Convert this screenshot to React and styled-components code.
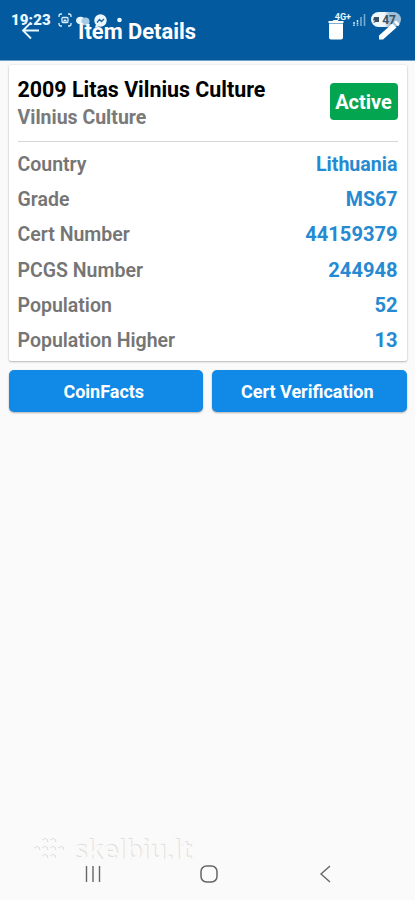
import React from "react";
import styled, { createGlobalStyle } from "styled-components";

const GlobalStyle = createGlobalStyle`
  * { box-sizing: border-box; }
  body { margin: 0; background: #fafafa; font-family: Roboto, "Liberation Sans", sans-serif; }
`;

const Screen = styled.div`
  display: flex;
  flex-direction: column;
  width: 415px;
  height: 900px;
  overflow: hidden;
  background: #fafafa;
`;

const Header = styled.header`
  position: relative;
  flex: none;
  height: 60px;
  background: #035a9f;
  box-shadow: 0 1px 0 #729dc6;
`;

const AppBar = styled.div`
  position: relative;
  display: flex;
  align-items: flex-start;
  height: 60px;
  padding: 18px 14px 0 21px;
  color: #fff;
`;

const AppTitle = styled.h1`
  flex: 1;
  margin: 0 0 0 38px;
  font-size: 21.9px;
  line-height: 27px;
  font-weight: 700;
  white-space: nowrap;
`;

const Icon = styled.svg`
  display: block;
  flex: none;
  margin-left: ${(p) => p.$gap || 0}px;
`;

const StatusBar = styled.div`
  position: absolute;
  top: 11px;
  left: 11px;
  right: 14px;
  display: flex;
  justify-content: space-between;
  height: 18px;
  color: #e9f8ff;
`;

const StatusGroup = styled.div`
  display: flex;
  align-items: flex-start;
`;

const Clock = styled.span`
  width: 47px;
  font-size: 15px;
  line-height: 19px;
  font-weight: 900;
  letter-spacing: 0.1px;
`;

const Network = styled.span`
  margin-right: 2px;
  font-size: 9px;
  line-height: 13px;
  font-weight: 700;
`;

const Battery = styled.span`
  display: flex;
  align-items: center;
  justify-content: flex-end;
  gap: 2px;
  width: 30px;
  height: 15px;
  margin: 1px 0 0 5px;
  padding-right: 5px;
  border-radius: 8px;
  background: linear-gradient(90deg, #eef7fb 45%, #9fc0d8 60%);
  color: #3c5160;
  font-size: 12px;
  font-weight: 700;
`;

const Content = styled.main`
  display: flex;
  flex-direction: column;
  flex: 1;
  padding: 5px 8.5px 0;
`;

const Card = styled.section`
  height: 296px;
  padding: 0 9px;
  border-radius: 2px;
  background: #fff;
  box-shadow: 0 1px 2px rgba(0, 0, 0, 0.24), 0 0 2px rgba(0, 0, 0, 0.12);
`;

const CardHeader = styled.div`
  display: flex;
  justify-content: space-between;
  align-items: flex-start;
  height: 77px;
  padding-top: 11px;
  border-bottom: 1px solid #d6d6d6;
`;

const CoinName = styled.h2`
  margin: 0;
  color: #000;
  font-size: 21.4px;
  line-height: 28px;
  font-weight: 700;
  white-space: nowrap;
`;

const CoinSeries = styled.p`
  margin: 0;
  color: #7a7a7a;
  font-size: 19.5px;
  line-height: 27px;
  font-weight: 700;
`;

const StatusBadge = styled.span`
  width: 68px;
  height: 37px;
  margin-top: 7px;
  border-radius: 4px;
  background: #04a551;
  color: #fff;
  font-size: 20px;
  line-height: 39px;
  font-weight: 700;
  text-align: center;
`;

const Details = styled.dl`
  margin: 0;
  padding-top: 5px;
`;

const DetailRow = styled.div`
  display: flex;
  justify-content: space-between;
  height: 35.2px;
  font-size: 19.5px;
  line-height: 35px;
  font-weight: 600;
`;

const Label = styled.dt`
  color: #757575;
`;

const Value = styled.dd`
  margin: 0;
  color: #258ad2;
  font-size: ${(p) => (p.$numeric ? 20.1 : 19.6)}px;
  font-weight: 700;
`;

const Actions = styled.div`
  display: flex;
  gap: 9px;
  margin-top: 9px;
`;

const ActionButton = styled.button`
  flex: 1;
  height: 42px;
  padding: 0 4px 0 0;
  border: 0;
  border-radius: 5px;
  background: #108ae6;
  box-shadow: 0 1px 2px rgba(0, 0, 0, 0.3);
  color: #fff;
  font-family: inherit;
  font-size: 18px;
  line-height: 43px;
  font-weight: 700;
`;

const Watermark = styled.div`
  display: flex;
  align-items: center;
  gap: 8px;
  height: 30px;
  padding: 2px 0 0 33px;
  color: #fafafa;
  font-family: "Open Sans", sans-serif;
  font-size: 26px;
  line-height: 30px;
  font-weight: 700;
  letter-spacing: -0.3px;
  text-shadow: 1px -1px 1px #dcdcdc;
`;

const NavBar = styled.nav`
  display: flex;
  align-items: center;
  flex: none;
  height: 36px;
  padding: 0 0 16px 84px;
`;

const details = [
  ["Country", "Lithuania"],
  ["Grade", "MS67"],
  ["Cert Number", "44159379"],
  ["PCGS Number", "244948"],
  ["Population", "52"],
  ["Population Higher", "13"],
];

const dots = [[12, 4], [20, 4], [4, 12], [12, 12], [20, 12], [28, 12], [12, 20], [20, 20]];

export default function App() {
  return (
    <>
      <GlobalStyle />
      <Screen>
        <Header>
          <StatusBar>
            <StatusGroup>
              <Clock>19:23</Clock>
              <Icon width="66" height="19" viewBox="0 0 66 19" fill="none" stroke="#d9effb" strokeWidth="1.3">
                <path d="M1 6V5q0-2 2-2h1M10 3h1q2 0 2 2v1M13 12v1q0 2-2 2h-1M4 15H3q-2 0-2-2v-1" />
                <rect x="4" y="6.500" width="6" height="5" rx="1" />
                <path d="M5.500 10.500l1.500-1.500 1.500 1.500" />
                <ellipse cx="22.500" cy="9.500" rx="4.500" ry="3.800" fill="#e9f8ff" stroke="none" />
                <circle cx="27.500" cy="10.500" r="4" fill="#a5cbe5" stroke="none" />
                <circle cx="42.500" cy="9.500" r="6.200" fill="#e9f8ff" stroke="none" />
                <path d="M39 11.500l2.500-3 2 2 2.500-2.500" stroke="#24649b" />
                <path d="M38 13.500l-1 3 4-1z" fill="#e9f8ff" stroke="none" />
                <circle cx="61.500" cy="9" r="2.300" fill="#e9f8ff" stroke="none" />
              </Icon>
            </StatusGroup>
            <StatusGroup>
              <Network>4G+</Network>
              <Icon width="13" height="18" viewBox="0 0 13 18" fill="none" stroke="#c2e2f5" strokeWidth="1.600">
                <path d="M1 11v4M4.500 9v6" strokeDasharray="2 .6" />
                <path d="M8 6v9M11.500 3v12" strokeOpacity=".6" />
              </Icon>
              <Battery>
                <Icon width="7" height="8" viewBox="0 0 7 8" fill="#3c5160">
                  <path d="M1 1h5v5H3L0 7l2-2.500H0z" />
                </Icon>
                47
              </Battery>
            </StatusGroup>
          </StatusBar>
          <AppBar>
            <Icon width="19" height="24" viewBox="0 0 19 24" fill="none" stroke="#e9f8ff" strokeWidth="1.8">
              <path d="M18 12.500H2M10 4.500l-8 8L10 20.500" />
            </Icon>
            <AppTitle>Item Details</AppTitle>
            <Icon width="16" height="24" viewBox="0 0 16 24" fill="#fff">
              <path d="M.5 3h4l1-1h4l1 1h5v2H.500zM1 5.500h14v14q0 2-2 2H3q-2 0-2-2z" />
            </Icon>
            <Icon $gap={34} width="23" height="24" viewBox="0 0 23 24" fill="#fff">
              <path d="M1 21.500V17.500L14.500 5.500l4 4L5 21.500zM16 4.200l1-1q1-1 2 0l2 2q1 1 0 2l-1 1z" />
            </Icon>
          </AppBar>
        </Header>
        <Content>
          <Card>
            <CardHeader>
              <div>
                <CoinName>2009 Litas Vilnius Culture</CoinName>
                <CoinSeries>Vilnius Culture</CoinSeries>
              </div>
              <StatusBadge>Active</StatusBadge>
            </CardHeader>
            <Details>
              {details.map(([label, value]) => (
                <DetailRow key={label}>
                  <Label>{label}</Label>
                  <Value $numeric={/^\d+$/.test(value)}>{value}</Value>
                </DetailRow>
              ))}
            </Details>
          </Card>
          <Actions>
            <ActionButton>CoinFacts</ActionButton>
            <ActionButton>Cert Verification</ActionButton>
          </Actions>
        </Content>
        <Watermark>
          <Icon width="33" height="27" viewBox="0 0 33 27" fill="none" stroke="#e0e0e0" strokeWidth="1.200">
            {dots.map(([x, y]) => (
              <path key={`${x}-${y}`} d={`M${x - 2.5} ${y - 1}q2.500-3 5 0v2`} />
            ))}
          </Icon>
          skelbiu.lt
        </Watermark>
        <NavBar>
          <Icon width="18" height="18" viewBox="0 0 18 18" stroke="#666" strokeWidth="1.400">
            <path d="M2.500 1v16M9 1v16M15.500 1v16" />
          </Icon>
          <Icon $gap={98} width="18" height="18" viewBox="0 0 18 18" fill="none" stroke="#666" strokeWidth="1.500">
            <rect x="1" y="1" width="16" height="16" rx="5.500" />
          </Icon>
          <Icon $gap={101} width="12" height="18" viewBox="0 0 12 18" fill="none" stroke="#666" strokeWidth="1.400">
            <path d="M11 1L2 9l9 8" />
          </Icon>
        </NavBar>
      </Screen>
    </>
  );
}
